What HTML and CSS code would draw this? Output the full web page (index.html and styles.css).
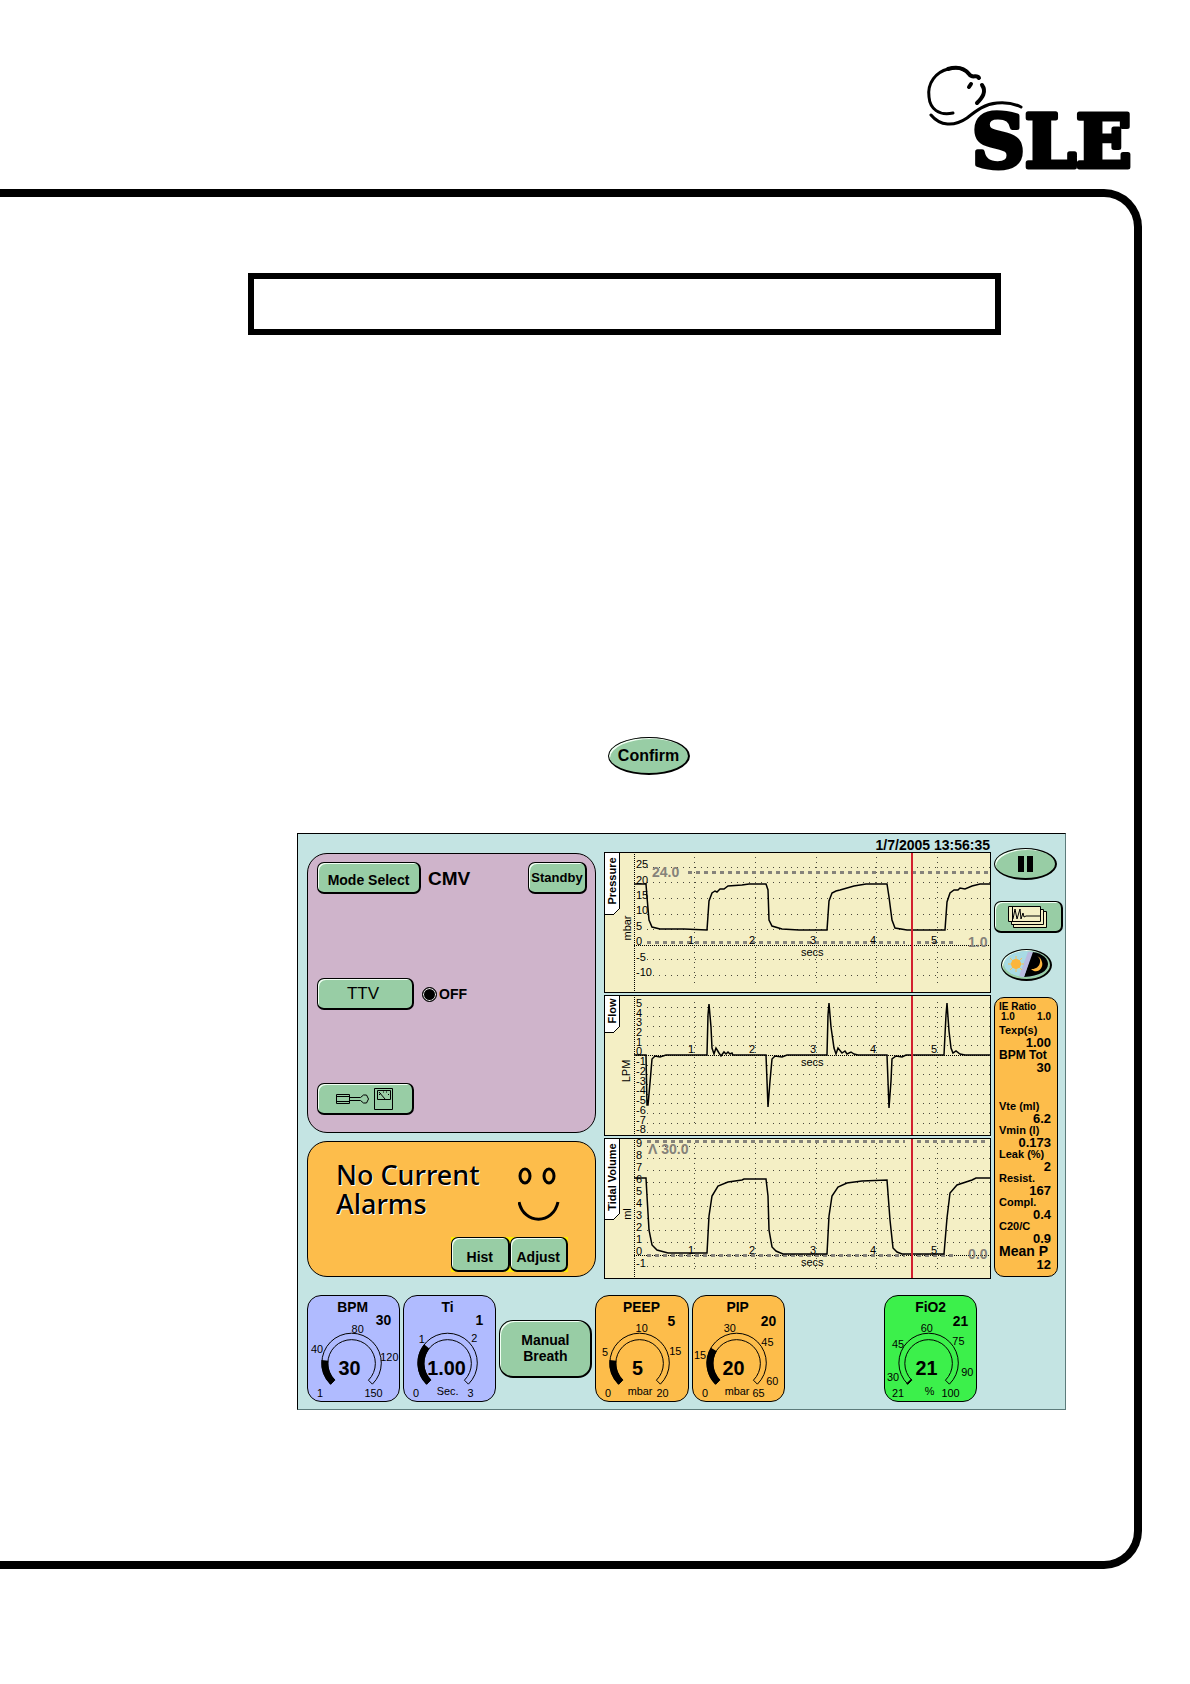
FILE: index.html
```html
<!DOCTYPE html>
<html lang="en">
<head>
  <meta charset="UTF-8">
  <meta name="viewport" content="width=device-width, initial-scale=1.0">
  <title>SLE ventilator - CMV</title>
  <link rel="stylesheet" href="styles.css">
</head>
<body>
  <header class="page-header">
    <svg class="logo" viewBox="0 0 208 106" role="img" aria-label="SLE">
      <g class="logo-line">
        <path stroke-width="3" d="M26 46C12 49 3 42 2 30C0 16 9 5 21 2C31-1 38 2 42 7"/>
        <path stroke-width="4" d="M21 2C31-1 38 2 42 7C45 12 50 7 52 11"/>
        <path stroke-width="4" d="M55 18C60 25 55 31 50 36M44 17L42 20"/>
        <path stroke-width="3" d="M4 48C13 59 27 60 40 51C50 43 58 37 70 36C80 35 88 37 94 40"/>
      </g>
      <text class="logo-text" x="45" y="100">SLE</text>
    </svg>
  </header>

  <main class="frame">
    <div class="title-box"></div>

    <div class="confirm-row">
      <button class="btn oval confirm" type="button">Confirm</button>
    </div>

    <section class="screen">
      <div class="top">
        <div class="left">
          <div class="panel mode-panel">
            <div class="row">
              <button class="btn mode-btn" type="button">Mode Select</button>
              <span class="mode">CMV</span>
              <button class="btn standby" type="button">Standby</button>
            </div>
            <div class="row ttv-row">
              <button class="btn ttv" type="button">TTV</button>
              <label class="ttv-state"><input type="radio" name="ttv" checked>OFF</label>
            </div>
            <div class="row">
              <button class="btn tools" type="button" aria-label="Settings">
                <svg width="60" height="24" viewBox="0 0 60 24">
                  <path d="M1.500 7.500h13v9h-13zM1.500 9.500h13M1.500 14.500h13M14.500 10.500h11M14.500 13.500h11M25.500 10.500l3-2.500h3l2 4-2 4h-3l-3-2.500M39.500 1.500h18v21h-18zM42.500 3.500h13v9h-13zM50 12L44 5M44 8l2-2M48 5h1M51 5h1M53 7l1 1"/>
                </svg>
              </button>
            </div>
          </div>

          <div class="panel alarm-panel">
            <div class="alarm-top">
              <p class="alarm-text">No Current<br>Alarms</p>
              <svg class="face" width="43" height="54" viewBox="0 0 43 54">
                <ellipse cx="7" cy="9" rx="5" ry="7"/>
                <ellipse cx="31" cy="9" rx="5" ry="7"/>
                <path d="M1 35C6 58 35 58 40 35"/>
              </svg>
            </div>
            <div class="alarm-actions">
              <button class="btn" type="button">Hist</button>
              <button class="btn" type="button">Adjust</button>
            </div>
          </div>
        </div>

        <div class="charts">
          <time class="clock" datetime="2005-07-01T13:56:35">1/7/2005 13:56:35</time>

          <svg class="chart" viewBox="0 0 387 141">
            <path class="dots" d="M43 15.500H386M43 30.500H386M43 46.500H386M43 62.500H386M43 77.500H386M43 107.500H386M43 123.500H386"/>
            <path class="major" d="M90.500 5V132M151.500 5V132M212.500 5V132M272.500 5V132M333.500 5V132"/>
            <path class="axis" d="M30.500 0V141M30 93.500H387"/>
            <path class="limit" d="M84 20.500H385M43 90.500H301M313 90.500H352"/>
            <path class="tab" d="M0 0H15V57L10 62H0Z"/>
            <text class="tab-text" transform="translate(12 29) rotate(-90)">Pressure</text>
            <text class="unit" transform="translate(27 76) rotate(-90)">mbar</text>
            <g class="tick">
              <text x="32" y="16">25</text>
              <text x="32" y="32">20</text>
              <text x="32" y="47">15</text>
              <text x="32" y="62">10</text>
              <text x="32" y="78">5</text>
              <text x="32" y="93">0</text>
              <text x="32" y="109">-5</text>
              <text x="32" y="124">-10</text>
              <text x="84" y="92">1</text>
              <text x="145" y="92">2</text>
              <text x="206" y="92">3</text>
              <text x="266" y="92">4</text>
              <text x="327" y="92">5</text>
            </g>
            <text class="secs" x="197" y="104">secs</text>
            <text class="limit-text" x="48" y="25">24.0</text>
            <text class="limit-text" x="364" y="95">1.0</text>
            <path class="trace" d="M30 32H42L43 45L45 68L48 75L56 77H80L103 78L105 49L108 41L111 39L113 40L116 37L120 37L124 34L138 33L145 32L162 32L164 38L165 68L168 74L178 77L195 78H223L225 49L228 41L232 39L236 38L243 36L250 34L262 32H283L285 45L288 68L291 76L303 78H341L343 50L346 41L350 38L354 38L356 36L361 37L368 34L376 32H387"/>
            <path class="cursor" d="M308 0V141"/>
          </svg>

          <svg class="chart" viewBox="0 0 387 141">
            <path class="dots" d="M43 12.500H386M43 21.500H386M43 31.500H386M43 41.500H386M43 50.500H386M43 70.500H386M43 79.500H386M43 89.500H386M43 99.500H386M43 108.500H386M43 118.500H386M43 128.500H386M43 137.500H386"/>
            <path class="major" d="M90.500 7V132M151.500 7V132M212.500 7V132M272.500 7V132M333.500 7V132"/>
            <path class="axis" d="M30.500 0V141M30 60.500H387"/>
            <path class="tab" d="M0 0H15V32L10 37H0Z"/>
            <text class="tab-text" transform="translate(12 16) rotate(-90)">Flow</text>
            <text class="unit" transform="translate(26 76) rotate(-90)">LPM</text>
            <g class="tick">
              <text x="32" y="12">5</text>
              <text x="32" y="22">4</text>
              <text x="32" y="31">3</text>
              <text x="32" y="41">2</text>
              <text x="32" y="51">1</text>
              <text x="32" y="60">0</text>
              <text x="32" y="70">-1</text>
              <text x="32" y="80">-2</text>
              <text x="32" y="90">-3</text>
              <text x="32" y="99">-4</text>
              <text x="32" y="109">-5</text>
              <text x="32" y="119">-6</text>
              <text x="32" y="129">-7</text>
              <text x="32" y="138">-8</text>
              <text x="84" y="58">1</text>
              <text x="145" y="58">2</text>
              <text x="206" y="58">3</text>
              <text x="266" y="58">4</text>
              <text x="327" y="58">5</text>
            </g>
            <text class="secs" x="197" y="71">secs</text>
            <path class="trace" d="M30 60H42L43 110H44L46 88L48 64L51 61L56 62L62 60H103L104 20L105 9L107 32L108 53L110 59L112 53L115 58L117 61L120 57L122 59L124 57L126 59L128 58L129 60H162L164 112L166 86L168 64L171 61L178 62L183 60H223L224 20L225 8L227 32L230 53L232 59L234 53L238 58L241 56L243 59L247 57L250 59L254 60H283L285 113L287 86L288 64L292 61L298 62L302 60H340L342 20L343 8L345 36L347 53L349 58L352 56L356 59L361 60H387"/>
            <path class="cursor" d="M308 0V141"/>
          </svg>

          <svg class="chart" viewBox="0 0 387 141">
            <path class="dots" d="M43 8.500H386M43 20.500H386M43 32.500H386M43 44.500H386M43 56.500H386M43 68.500H386M43 80.500H386M43 92.500H386M43 104.500H386M43 128.500H386"/>
            <path class="major" d="M90.500 5V132M151.500 5V132M212.500 5V132M272.500 5V132M333.500 5V132"/>
            <path class="axis" d="M30.500 0V141M30 117.500H387"/>
            <path class="limit" d="M43 3.500H301M313 3.500H385M43 117.500H301M313 117.500H352"/>
            <path class="tab" d="M0 0H15V76L10 81H0Z"/>
            <text class="tab-text" transform="translate(12 39) rotate(-90)">Tidal Volume</text>
            <text class="unit" transform="translate(27 76) rotate(-90)">ml</text>
            <g class="tick">
              <text x="32" y="9">9</text>
              <text x="32" y="21">8</text>
              <text x="32" y="33">7</text>
              <text x="32" y="45">6</text>
              <text x="32" y="57">5</text>
              <text x="32" y="69">4</text>
              <text x="32" y="81">3</text>
              <text x="32" y="93">2</text>
              <text x="32" y="105">1</text>
              <text x="32" y="117">0</text>
              <text x="32" y="129">-1</text>
              <text x="84" y="116">1</text>
              <text x="145" y="116">2</text>
              <text x="206" y="116">3</text>
              <text x="266" y="116">4</text>
              <text x="327" y="116">5</text>
            </g>
            <text class="secs" x="197" y="128">secs</text>
            <text class="limit-text" x="44" y="16">Λ 30.0</text>
            <text class="limit-text" x="364" y="121">0.0</text>
            <path class="trace" d="M30 40H42L43 58L45 92L48 107L53 112L64 115H103L105 78L108 58L114 48L124 44L138 42L140 41H162L164 58L165 92L168 109L172 113L179 116H223L225 78L228 58L234 49L243 45L258 43L283 42L286 82L289 110L293 114L298 116H340L343 80L346 55L353 47L368 42L372 40H387"/>
            <path class="cursor" d="M308 0V141"/>
          </svg>
        </div>

        <div class="side">
          <button class="btn oval pause" type="button" aria-label="Pause">
            <svg width="16" height="16" viewBox="0 0 16 16"><path d="M1 0h6v16h-6zM10 0h6v16h-6z"/></svg>
          </button>
          <button class="btn pages" type="button" aria-label="Waveforms">
            <svg width="40" height="22" viewBox="0 0 40 22">
              <g class="sheets">
                <path d="M5.500 5.500h33v16h-33z"/>
                <path d="M3.500 3.500h32v15h-32z"/>
                <path d="M.500 .500h32v15h-32z"/>
              </g>
              <path d="M4.500 1v14M5 13L7 3L9 13L12 3L13 13L15 7L16 11L18 10H32"/>
            </svg>
          </button>
          <button class="btn oval day-night" type="button" aria-label="Day or night">
            <svg width="45" height="27" viewBox="0 0 45 27">
              <ellipse cx="22" cy="13" rx="22" ry="13" fill="#a8dbe4"/>
              <path d="M28 1C39 2 44 8 44 13C44 20 36 25 20 26Z" fill="#000"/>
              <path d="M24 1L29 1L20 26L15 25Z" fill="#b9bbe0"/>
              <path d="M12 5V21M4 13H20M6 7L18 19M18 7L6 19" stroke="#f5c25a"/>
              <circle cx="12" cy="13" r="5" fill="#fbb53c"/>
              <path d="M33 5C39 8 36 19 27 18C33 24 40 17 38 11C37 7 35 6 33 5Z" fill="#fbb53c"/>
            </svg>
          </button>

          <dl class="metrics">
            <div class="ratio"><dt>IE Ratio</dt><dd>1.0</dd><dd>1.0</dd></div>
            <div><dt>Texp(s)</dt><dd>1.00</dd></div>
            <div class="wide"><dt>BPM Tot</dt><dd>30</dd></div>
            <div class="second"><dt>Vte (ml)</dt><dd>6.2</dd></div>
            <div><dt>Vmin (l)</dt><dd>0.173</dd></div>
            <div><dt>Leak (%)</dt><dd>2</dd></div>
            <div><dt>Resist.</dt><dd>167</dd></div>
            <div><dt>Compl.</dt><dd>0.4</dd></div>
            <div><dt>C20/C</dt><dd>0.9</dd></div>
            <div class="mean"><dt>Mean P</dt><dd>12</dd></div>
          </dl>
        </div>
      </div>

      <div class="dials">
        <div class="dial blue">
          <svg viewBox="0 0 92 106">
            <path class="arc" d="M23 89A30 30 0 1 1 65 89L61 85A24 24 0 1 0 27 85Z"/>
            <path class="fill" d="M25 87A27 27 0 0 1 17 65"/>
            <text class="name" x="45" y="16">BPM</text>
            <text class="set" x="84" y="29">30</text>
            <text class="value" x="42" y="80">30</text>
            <g class="scale">
              <text x="9" y="102">1</text><text x="3" y="58">40</text><text x="44" y="37">80</text>
              <text x="73" y="66">120</text><text x="57" y="102">150</text>
            </g>
          </svg>
        </div>
        <div class="dial blue">
          <svg viewBox="0 0 92 106">
            <path class="arc" d="M23 89A30 30 0 1 1 65 89L61 85A24 24 0 1 0 27 85Z"/>
            <path class="fill" d="M25 87A27 27 0 0 1 23 51"/>
            <text class="name" x="44" y="16">Ti</text>
            <text class="set" x="80" y="29">1</text>
            <text class="value" x="43" y="80">1.00</text>
            <g class="scale">
              <text x="9" y="102">0</text><text x="15" y="47">1</text><text x="68" y="46">2</text>
              <text x="64" y="102">3</text><text x="33" y="100">Sec.</text>
            </g>
          </svg>
        </div>
        <button class="btn manual" type="button">Manual Breath</button>
        <div class="dial orange">
          <svg viewBox="0 0 92 106">
            <path class="arc" d="M23 89A30 30 0 1 1 65 89L61 85A24 24 0 1 0 27 85Z"/>
            <path class="fill" d="M25 87A27 27 0 0 1 17 65"/>
            <text class="name" x="46" y="16">PEEP</text>
            <text class="set" x="80" y="30">5</text>
            <text class="value" x="42" y="80">5</text>
            <g class="scale">
              <text x="9" y="102">0</text><text x="6" y="61">5</text><text x="40" y="36">10</text>
              <text x="74" y="60">15</text><text x="61" y="102">20</text><text x="32" y="100">mbar</text>
            </g>
          </svg>
        </div>
        <div class="dial orange">
          <svg viewBox="0 0 92 106">
            <path class="arc" d="M23 89A30 30 0 1 1 65 89L61 85A24 24 0 1 0 27 85Z"/>
            <path class="fill" d="M25 87A27 27 0 0 1 21 54"/>
            <text class="name" x="45" y="16">PIP</text>
            <text class="set" x="84" y="30">20</text>
            <text class="value" x="41" y="80">20</text>
            <g class="scale">
              <text x="9" y="102">0</text><text x="1" y="64">15</text><text x="31" y="36">30</text>
              <text x="69" y="50">45</text><text x="74" y="90">60</text><text x="60" y="102">65</text><text x="32" y="100">mbar</text>
            </g>
          </svg>
        </div>
        <div class="dial green">
          <svg viewBox="0 0 92 106">
            <path class="arc" d="M23 89A30 30 0 1 1 65 89L61 85A24 24 0 1 0 27 85Z"/>
            <path class="fill" d="M25 87A27 27 0 0 1 24 86"/>
            <text class="name" x="46" y="16">FiO2</text>
            <text class="set" x="84" y="30">21</text>
            <text class="value" x="42" y="80">21</text>
            <g class="scale">
              <text x="7" y="102">21</text><text x="2" y="86">30</text><text x="7" y="52">45</text>
              <text x="36" y="36">60</text><text x="68" y="49">75</text><text x="77" y="81">90</text>
              <text x="57" y="102">100</text><text x="40" y="100">%</text>
            </g>
          </svg>
        </div>
      </div>
    </section>
  </main>
</body>
</html>
```
FILE: styles.css
```css
* {
  margin: 0;
  padding: 0;
  box-sizing: border-box;
}

body {
  background: #fff;
  color: #000;
  font-family: "Liberation Sans", Arial, sans-serif;
  padding-bottom: 115px;
}

svg {
  display: block;
}

.page-header {
  display: flex;
  justify-content: flex-end;
  height: 189px;
  padding: 67px 55px 0 0;
}

.logo {
  width: 208px;
  height: 106px;
  overflow: visible;
}

.logo-line {
  fill: none;
  stroke: #000;
  stroke-linecap: round;
}

.logo-text {
  font-family: "DejaVu Serif", serif;
  font-weight: bold;
  font-size: 73px;
  stroke: #000;
  stroke-width: 5px;
  stroke-linejoin: round;
}

/* page frame, open on the left */
.frame {
  margin-right: 48px;
  padding: 76px 68px 151px 0;
  border: 8px solid #000;
  border-left: 0;
  border-radius: 0 38px 38px 0;
}

.title-box {
  height: 62px;
  margin: 0 65px 0 248px;
  border: 6px solid #000;
}

.confirm-row {
  margin: 402px 0 58px 608px;
}

/* buttons */
.btn {
  display: flex;
  align-items: center;
  justify-content: center;
  height: 32px;
  border: 1px solid #000;
  border-width: 1px 2px 2px 1px;
  border-radius: 7px;
  background: #98cda5;
  box-shadow: inset 2px 2px 0 -1px #f2fff4;
  color: #000;
  font-family: inherit;
  font-size: 14px;
  font-weight: bold;
  white-space: nowrap;
}

.btn svg {
  fill: none;
  stroke: #000;
}

.oval {
  border-radius: 50%;
}

.confirm {
  width: 82px;
  height: 38px;
  font-size: 16px;
}

/* ventilator screen */
.screen {
  margin-left: 297px;
  padding: 0 2px 7px 9px;
  border: 1px solid #000;
  border-color: #000 #5d7b7b #5d7b7b #000;
  background: #c4e4e3;
}

.top {
  display: flex;
}

.left {
  flex: 289;
  margin-right: 8px;
  padding-top: 19px;
}

.panel {
  border: 1px solid #000;
  border-radius: 20px;
}

.mode-panel {
  height: 280px;
  padding: 8px 8px 0 9px;
  background: #cfb4cb;
}

.row {
  display: flex;
  align-items: center;
}

.mode-btn {
  width: 104px;
  padding-top: 4px;
}

.mode {
  margin-left: 7px;
  padding-top: 2px;
  font-size: 19px;
  font-weight: bold;
}

.standby {
  width: 59px;
  margin-left: auto;
  font-size: 13px;
}

.ttv-row {
  margin: 84px 0 73px;
}

.ttv,
.tools {
  width: 97px;
}

.ttv {
  padding-right: 4px;
  font-size: 17px;
  font-weight: normal;
}

.ttv-state {
  display: flex;
  align-items: center;
  gap: 2px;
  margin-left: 8px;
  font-size: 14px;
  font-weight: bold;
}

.ttv-state input {
  appearance: none;
  width: 15px;
  height: 15px;
  border: 1px solid #000;
  border-radius: 50%;
  background: #000;
  box-shadow: inset 0 0 0 1px #eee;
}

.alarm-panel {
  height: 136px;
  margin-top: 8px;
  padding: 18px 20px 0 28px;
  background: #fdbd4b;
}

.alarm-top {
  display: flex;
  height: 77px;
}

.alarm-text {
  width: 182px;
  font-family: "Comic Sans MS", "Noto Sans", sans-serif;
  font-size: 27px;
  font-weight: 500;
  line-height: 29px;
  text-shadow: 1px 1px 0 #fff;
  white-space: nowrap;
}

.face {
  margin-top: 7px;
  fill: none;
  stroke: #000;
  stroke-width: 3px;
}

.alarm-actions {
  display: flex;
  width: 117px;
  margin-left: 115px;
  background: #ffef00;
}

.alarm-actions .btn {
  flex: 1;
  height: 35px;
  padding-top: 5px;
}

/* waveforms */
.charts {
  flex: 387;
}

.clock {
  display: block;
  height: 18px;
  padding: 4px 1px 0 0;
  font-size: 14px;
  font-weight: bold;
  line-height: 14px;
  text-align: right;
}

.chart {
  width: 100%;
  height: auto;
  margin-bottom: 2px;
  outline: 1px solid #000;
  outline-offset: -1px;
  background: #f4efc5;
}

.chart path {
  fill: none;
  stroke: #000;
  shape-rendering: crispEdges;
}

.chart .dots {
  stroke: #4a483c;
  stroke-dasharray: 1 5;
}

.chart .major {
  stroke: #4a483c;
  stroke-dasharray: 1 4;
}

.chart .axis {
  stroke-dasharray: 1 1;
}

.chart .limit {
  stroke: #85827a;
  stroke-width: 3px;
  stroke-dasharray: 4 4;
}

.chart .tab {
  fill: #fff;
}

.chart .trace {
  stroke-width: 1.5px;
  shape-rendering: auto;
}

.chart .cursor {
  stroke: #d2202f;
  stroke-width: 2px;
}

.tab-text {
  font-size: 11px;
  font-weight: bold;
  text-anchor: middle;
}

.unit {
  font-size: 11px;
  text-anchor: middle;
}

.tick {
  font-size: 11px;
}

.secs {
  font-size: 11px;
}

.limit-text {
  font-size: 14px;
  font-weight: bold;
  fill: #85827a;
}

/* right hand column */
.side {
  flex: 69;
  margin-left: 3px;
  padding-top: 14px;
}

.pause {
  width: 63px;
}

.pause svg {
  fill: #000;
  stroke: none;
}

.pages {
  width: 69px;
  margin: 21px 0 16px;
}

.pages .sheets {
  fill: #f4efc5;
}

.day-night {
  width: 51px;
  margin-left: 7px;
}

.day-night svg {
  stroke: none;
}

.metrics {
  width: 64px;
  height: 280px;
  margin-top: 16px;
  padding: 3px 6px 0 4px;
  border: 1px solid #000;
  border-radius: 10px;
  background: #fdbd4b;
  font-weight: bold;
  white-space: nowrap;
}

.metrics dt {
  height: 11px;
  font-size: 11px;
  line-height: 11px;
}

.metrics dd {
  height: 13px;
  font-size: 13px;
  line-height: 13px;
  text-align: right;
}

.metrics .ratio {
  display: flex;
  flex-wrap: wrap;
  justify-content: space-between;
  padding-left: 2px;
  margin-bottom: 3px;
}

.metrics .ratio dt {
  width: 100%;
  margin-left: -2px;
  font-size: 10px;
}

.metrics .ratio dd {
  height: 10px;
  font-size: 10px;
  line-height: 10px;
}

.metrics .wide dt {
  height: 12px;
  font-size: 12px;
  line-height: 12px;
}

.metrics .second {
  margin-top: 27px;
}

.metrics .mean dt {
  height: 13px;
  font-size: 14px;
  line-height: 13px;
}

/* parameter dials */
.dials {
  display: grid;
  grid-template-columns: repeat(7, 1fr);
  gap: 3px;
  align-items: center;
  margin: 14px 86px 0 0;
}

.dial {
  border: 1px solid #000;
  border-radius: 14px;
}

.dial svg {
  width: 100%;
  height: auto;
}

.blue {
  background: #b0bbff;
}

.orange {
  background: #fdbd4b;
}

.green {
  grid-column: 7;
  background: #3cf04b;
}

.manual {
  height: 58px;
  padding: 0 16px;
  border-radius: 14px;
  line-height: 16px;
  white-space: normal;
}

.arc {
  fill: none;
  stroke: #000;
}

.fill {
  fill: none;
  stroke: #000;
  stroke-width: 7px;
}

.name {
  font-size: 14px;
  font-weight: bold;
  text-anchor: middle;
}

.set {
  font-size: 14px;
  font-weight: bold;
  text-anchor: end;
}

.value {
  font-size: 20px;
  font-weight: bold;
  text-anchor: middle;
}

.scale {
  font-size: 11px;
}
```
